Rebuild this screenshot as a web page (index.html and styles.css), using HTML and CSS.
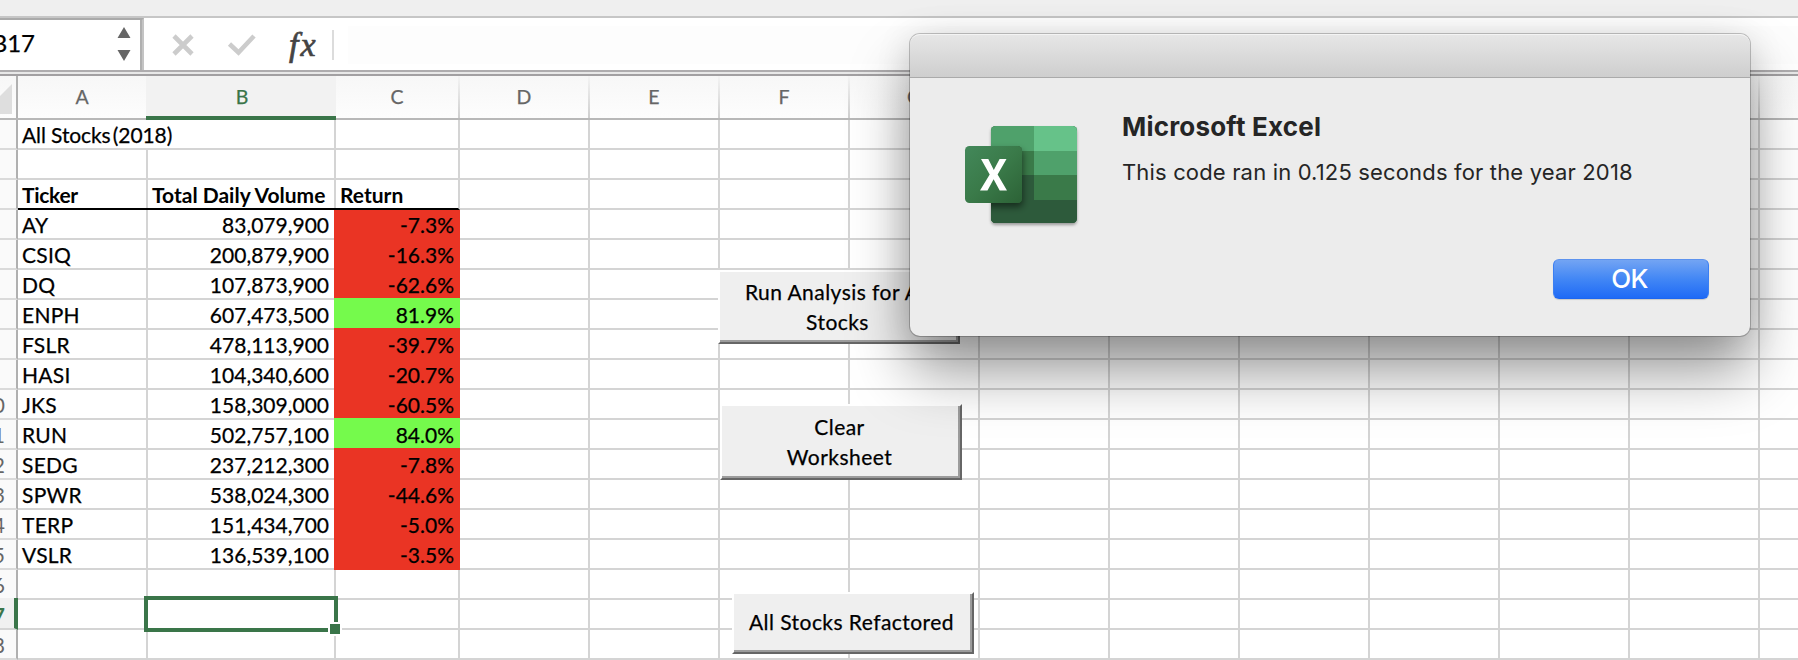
FILE: index.html
```
<!DOCTYPE html>
<html lang="en">
<head>
<meta charset="utf-8">
<title>All Stocks (2018)</title>
<link rel="stylesheet" href="styles.css">
</head>
<body>
<div class="window">
  <div class="ribbon-edge"></div>
  <div class="formula-bar">
    <div class="name-box">
      <span class="name-text">B17</span>
      <svg class="stepper" width="14" height="34" viewBox="0 0 14 34"><path d="M7 0L13.5 11H.5zM7 34L13.5 23H.5z" fill="#666"/></svg>
    </div>
    <svg class="cancel" width="24" height="24" viewBox="0 0 24 24"><path d="M3 3L21 21M21 3L3 21" stroke="#ccc" stroke-width="4.6" fill="none"/></svg>
    <svg class="accept" width="30" height="24" viewBox="0 0 30 24"><path d="M2.5 11L11.500 19.500L27 3" stroke="#ccc" stroke-width="4.600" fill="none"/></svg>
    <span class="fx"><span>f</span><span class="fx-x">x</span></span>
    <span class="bar-divider"></span>
    <span class="formula-input"></span>
  </div>
  <div class="bar-gap"></div>
  <div class="col-heads">
    <div class="corner"><svg width="12" height="30" viewBox="0 0 12 30"><path d="M12 0V30H0V12z" fill="#dedede"/></svg></div>
    <div class="head a">A</div><div class="head b active">B</div><div class="head c">C</div><div class="head">D</div><div class="head">E</div><div class="head">F</div><div class="head">G</div><div class="head">H</div><div class="head">I</div><div class="head">J</div><div class="head">K</div><div class="head">L</div><div class="head">M</div><div class="head"></div>
  </div>
  <div class="sheet">
    <div class="row"><div class="num"></div><div class="cell ab">All Stocks<span class="paren"> (2018)</span></div><div class="cell c"></div><div class="rest"></div></div>
    <div class="row"><div class="num"></div><div class="cell a"></div><div class="cell b"></div><div class="cell c"></div><div class="rest"></div></div>
    <div class="row titles"><div class="num"></div><div class="cell a">Ticker</div><div class="cell b">Total Daily Volume</div><div class="cell c">Return</div><div class="rest"></div></div>
    <div class="row"><div class="num"></div><div class="cell a">AY</div><div class="cell b">83,079,900</div><div class="cell c down">-7.3%</div><div class="rest"></div></div>
    <div class="row"><div class="num"></div><div class="cell a">CSIQ</div><div class="cell b">200,879,900</div><div class="cell c down">-16.3%</div><div class="rest"></div></div>
    <div class="row"><div class="num"></div><div class="cell a">DQ</div><div class="cell b">107,873,900</div><div class="cell c down">-62.6%</div><div class="rest"></div></div>
    <div class="row"><div class="num"></div><div class="cell a">ENPH</div><div class="cell b">607,473,500</div><div class="cell c up">81.9%</div><div class="rest"></div></div>
    <div class="row"><div class="num"></div><div class="cell a">FSLR</div><div class="cell b">478,113,900</div><div class="cell c down">-39.7%</div><div class="rest"></div></div>
    <div class="row"><div class="num"></div><div class="cell a">HASI</div><div class="cell b">104,340,600</div><div class="cell c down">-20.7%</div><div class="rest"></div></div>
    <div class="row"><div class="num">10</div><div class="cell a">JKS</div><div class="cell b">158,309,000</div><div class="cell c down">-60.5%</div><div class="rest"></div></div>
    <div class="row"><div class="num">11</div><div class="cell a">RUN</div><div class="cell b">502,757,100</div><div class="cell c up">84.0%</div><div class="rest"></div></div>
    <div class="row"><div class="num">12</div><div class="cell a">SEDG</div><div class="cell b">237,212,300</div><div class="cell c down">-7.8%</div><div class="rest"></div></div>
    <div class="row"><div class="num">13</div><div class="cell a">SPWR</div><div class="cell b">538,024,300</div><div class="cell c down">-44.6%</div><div class="rest"></div></div>
    <div class="row"><div class="num">14</div><div class="cell a">TERP</div><div class="cell b">151,434,700</div><div class="cell c down">-5.0%</div><div class="rest"></div></div>
    <div class="row"><div class="num">15</div><div class="cell a">VSLR</div><div class="cell b">136,539,100</div><div class="cell c down">-3.5%</div><div class="rest"></div></div>
    <div class="row"><div class="num">16</div><div class="cell a"></div><div class="cell b"></div><div class="cell c"></div><div class="rest"></div></div>
    <div class="row"><div class="num current">17</div><div class="cell a"></div><div class="cell b selected"><span class="selection"></span><span class="handle"></span></div><div class="cell c"></div><div class="rest"></div></div>
    <div class="row"><div class="num">18</div><div class="cell a"></div><div class="cell b"></div><div class="cell c"></div><div class="rest"></div></div>
  </div>
  <button class="macro run">Run Analysis for All<br>Stocks</button>
  <button class="macro clear">Clear<br>Worksheet</button>
  <button class="macro refactored">All Stocks Refactored</button>

  <div class="dialog">
    <div class="dialog-title"></div>
    <div class="dialog-body">
      <svg class="logo" width="120" height="110" viewBox="0 0 120 110">
        <defs>
          <linearGradient id="tile" x1="0" y1="0" x2="1" y2="1"><stop offset="0" stop-color="#43885a"/><stop offset=".5" stop-color="#3a7a49"/><stop offset="1" stop-color="#2c6236"/></linearGradient>
          <clipPath id="book"><rect x="31" y="5" width="86" height="97" rx="4.500"/></clipPath>
          <filter id="soft" x="-20%" y="-20%" width="150%" height="150%"><feDropShadow dx="0" dy="2" stdDeviation="1.500" flood-opacity=".35"/></filter>
          <filter id="deep" x="-20%" y="-20%" width="150%" height="160%"><feDropShadow dx="1" dy="4" stdDeviation="3.500" flood-opacity=".5"/></filter>
        </defs>
        <rect x="31" y="5" width="86" height="97" rx="4.500" fill="#2d5a3b" filter="url(#soft)"/>
        <g clip-path="url(#book)">
          <rect x="31" y="5" width="43" height="25" fill="#4fa16b"/>
          <rect x="74" y="5" width="43" height="25" fill="#66c289"/>
          <rect x="31" y="30" width="43" height="24" fill="#3a7a49"/>
          <rect x="74" y="30" width="43" height="24" fill="#4fa16b"/>
          <rect x="31" y="54" width="43" height="48" fill="#2d5a3b"/>
          <rect x="74" y="54" width="43" height="25" fill="#3a7a49"/>
          <rect x="31" y="79" width="86" height="23" fill="#2d5a3b"/>
          <rect x="5" y="25" width="57" height="57" rx="4.500" fill="#2d5a3b" filter="url(#deep)"/>
        </g>
        <rect x="5" y="25" width="57" height="57" rx="4.500" fill="url(#tile)"/>
        <path d="M21 38H28.300L33.800 49L39.600 38H46.500L37.600 53.500L47 69.500H39.700L33.600 58.300L27.500 69.500H20L29.700 53.500z" fill="#fff"/>
      </svg>
      <div class="message">
        <h1>Microsoft Excel</h1>
        <p>This code ran in 0.125 seconds for the year 2018</p>
        <button class="ok">OK</button>
      </div>
    </div>
  </div>
</div>
</body>
</html>
```
FILE: styles.css
```
* { box-sizing: border-box; }
body { margin: 0; background: #fff; }
button { font: inherit; padding: 0; margin: 0; }

.window {
  position: relative;
  width: 1798px;
  height: 660px;
  overflow: hidden;
  font: 21px/30px Lato, "Open Sans", sans-serif;
  color: #000;
}

.ribbon-edge { height: 18px; background: #efefef; border-bottom: 2px solid #c6c6c6; }

.formula-bar { display: flex; height: 52px; background: #fff; }
.name-box {
  display: flex;
  justify-content: space-between;
  width: 144px;
  height: 52px;
  padding: 7px 11px 0 0;
  border-top: 2px solid #aaa;
  border-right: 2px solid #c4c4c4;
  box-shadow: inset -2px 0 #b0b0b0;
}
.name-text { width: 35px; direction: rtl; font-size: 24px; line-height: 32px; white-space: nowrap; -webkit-text-stroke: .25px; }
.stepper { flex: none; }
.cancel { margin: 15px 0 0 27px; }
.accept { margin: 15px 0 0 32px; }
.fx {
  display: flex;
  width: 43px;
  margin: 9px 0 0 32px;
  font: italic 34px/36px "Liberation Serif", serif;
  color: #444;
  -webkit-text-stroke: .7px #444;
}
.fx-x { margin-left: 2px; }
.bar-divider { width: 2px; height: 30px; margin: 12px 0 0; background: #dcdcdc; }
.formula-input { flex: 1; margin: 8px 0 6px 14px; background: #fdfdfd; }

.bar-gap {
  height: 6px;
  border-top: 2px solid #aeacae;
  border-bottom: 2px solid #a2a0a2;
  background: #e8e8e8;
}

.col-heads {
  display: flex;
  height: 44px;
  background: linear-gradient(#f7f7f7, #fdfdfd);
  border-bottom: 2px solid #b8b8b8;
}
.corner { flex: none; width: 18px; padding-top: 8px; border-right: 2px solid #b0b0b0; }
.corner svg { display: block; }
.head {
  flex: none;
  width: 130px;
  height: 42px;
  padding-right: 2px;
  font-size: 19.5px;
  line-height: 42px;
  text-align: center;
  color: #666;
  -webkit-text-stroke: .25px;
  background: linear-gradient(#f4f4f4, #cfcfcf) right / 2px 100% no-repeat;
}
.head.b { width: 188px; }
.head.c { width: 124px; }
.head.active {
  position: relative;
  width: 190px;
  height: 44px;
  margin: 0 0 -2px -2px;
  padding: 0 0 0 2px;
  color: #3a7549;
  background: #f2f2f2;
  border-bottom: 4px solid #3a7549;
}

.sheet { position: relative; z-index: 0; }
.row { display: flex; height: 30px; }
.num {
  flex: none;
  display: flex;
  justify-content: flex-end;
  width: 18px;
  padding-right: 11px;
  font-size: 21px;
  color: #666;
  background: #fafafa;
  border-right: 2px solid #b0b0b0;
  border-bottom: 2px solid #dadada;
}
.num.current {
  position: relative;
  height: 32px;
  margin-top: -2px;
  padding: 2px 9px 0 0;
  color: #3a7549;
  font-weight: bold;
  background: #f0f0f0;
  border-right: 4px solid #3a7549;
  border-bottom: 2px solid #d4d4d4;
}
.cell {
  flex: none;
  padding: 0 4px;
  border-right: 2px solid #d4d4d4;
  border-bottom: 2px solid #d4d4d4;
  white-space: nowrap;
  -webkit-text-stroke: .25px;
}
.cell.ab { width: 318px; letter-spacing: -.1px; }
.paren { margin-left: -3px; }
.cell.a { width: 130px; letter-spacing: .25px; }
.cell.b { width: 188px; padding-right: 5px; text-align: right; }
.cell.c { width: 124px; text-align: right; }
.rest {
  flex: 1;
  border-bottom: 2px solid #d4d4d4;
  background: repeating-linear-gradient(90deg, transparent 0 128px, #d4d4d4 128px 130px);
}
.titles { position: relative; z-index: 1; }
.titles .cell { font-weight: bold; text-align: left; border-bottom-color: #000; -webkit-text-stroke: 0; }
.titles .a, .titles .b { border-right: 0; box-shadow: inset -2px 0 #d4d4d4; }
.titles .a { letter-spacing: -.3px; }
.cell.up, .cell.down { width: 126px; margin-left: -2px; border: 0; padding-right: 6px; }
.down { background: #ea3424; box-shadow: 0 -2px #ea3424; }
.up { background: #75fa4c; box-shadow: 0 -2px #75fa4c; }

.selected { position: relative; }
.selection { position: absolute; inset: -4px; border: 4px solid #3a7549; }
.handle {
  position: absolute;
  right: -8px;
  bottom: -8px;
  width: 14px;
  height: 14px;
  background: #3a7549;
  border: 2px solid #fff;
}

.macro {
  position: absolute;
  width: 242px;
  padding: 0 3px 1px 0;
  text-align: center;
  line-height: 30px;
  letter-spacing: .45px;
  -webkit-text-stroke: .25px;
  color: #000;
  background: #efefef;
  border: 2px solid;
  border-color: #fff #666 #666 #fff;
  box-shadow: inset -2px -2px #9c9c9c;
}
.run { left: 718px; top: 270px; height: 74px; }
.clear { left: 720px; top: 404px; height: 76px; }
.refactored { left: 732px; top: 592px; height: 62px; padding-bottom: 3px; }

.dialog {
  position: absolute;
  left: 910px;
  top: 34px;
  width: 840px;
  height: 302px;
  border-radius: 10px;
  background: #ececec;
  box-shadow: 0 0 0 1px rgba(0, 0, 0, .22), 0 36px 60px rgba(0, 0, 0, .4), 0 4px 36px rgba(0, 0, 0, .12);
  font-family: Inter, sans-serif;
  color: #252525;
}
.dialog-title {
  height: 44px;
  border-radius: 10px 10px 0 0;
  background: linear-gradient(#e6e6e6, #cecece);
  border-top: 1px solid #f4f4f4;
  border-bottom: 1px solid #aaa;
}
.dialog-body { display: flex; padding: 43px 41px 0 50px; }
.logo { flex: none; }
.message { display: flex; flex-direction: column; flex: 1; padding-left: 42px; }
h1 { margin: -10px 0 0; font-size: 26px; line-height: 32px; font-weight: 700; letter-spacing: .2px; }
p { margin: 14px 0 0; font-size: 22px; line-height: 30px; letter-spacing: .16px; white-space: nowrap; }
.ok {
  align-self: flex-end;
  width: 156px;
  height: 40px;
  margin-top: 72px;
  padding-right: 3px;
  border: 1px solid;
  border-color: #5d93ee #3c7ff2 #1d66f0;
  border-radius: 6px;
  background: linear-gradient(#73a4f3, #4287f5 50%, #1f6af6);
  box-shadow: 0 1px 1px rgba(0, 0, 0, .15);
  font-size: 26px;
  line-height: 36px;
  letter-spacing: -.6px;
  font-weight: 500;
  color: #fff;
}
```
